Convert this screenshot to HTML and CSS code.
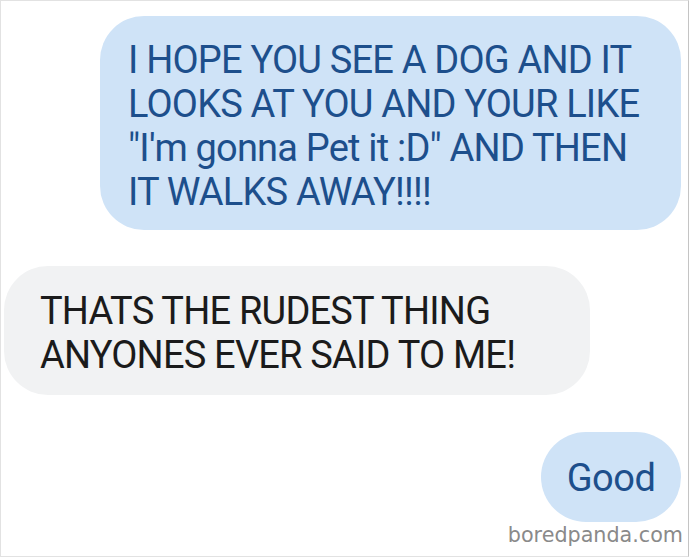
FILE: index.html
```html
<!DOCTYPE html>
<html>
<head>
<meta charset="utf-8">
<link rel="stylesheet" href="styles.css">
</head>
<body>
<div class="frame">
  <div class="row out">
    <div class="bubble sent big">I HOPE YOU SEE A DOG AND IT<br>LOOKS AT YOU AND YOUR LIKE<br>"I'm gonna Pet it :D" AND THEN<br>IT WALKS AWAY!!!!</div>
  </div>
  <div class="row in">
    <div class="bubble recv">THATS THE RUDEST THING<br>ANYONES EVER SAID TO ME!</div>
  </div>
  <div class="row out">
    <div class="bubble sent small">Good</div>
  </div>
  <div class="watermark">boredpanda.com</div>
</div>
</body>
</html>
```
FILE: styles.css
```css
html, body {
  margin: 0;
  padding: 0;
  background: #ffffff;
}
.frame {
  width: 687px;
  height: 555px;
  border: 1px solid #e2e2e2;
  border-right-color: #c4c4c4;
  background: #ffffff;
  display: flex;
  flex-direction: column;
  font-family: Roboto, "Liberation Sans", sans-serif;
}
.row {
  display: flex;
}
.row.out {
  justify-content: flex-end;
  padding-right: 7px;
}
.row.in {
  justify-content: flex-start;
  padding-left: 3px;
}
.bubble {
  font-size: 38px;
  line-height: 44px;
  letter-spacing: -0.8px;
  white-space: nowrap;
}
.sent {
  background: #cfe3f7;
  color: #1d4f8c;
}
.recv {
  background: #f1f2f3;
  color: #1b1b1b;
}
.big {
  margin-top: 15px;
  width: 581px;
  box-sizing: border-box;
  padding: 22px 28px 16px 28px;
  border-radius: 44px;
}
.recv {
  margin-top: 36px;
  width: 586px;
  box-sizing: border-box;
  padding: 23px 36px 18px 36px;
  border-radius: 44px;
}
.small {
  margin-top: 37px;
  width: 140px;
  box-sizing: border-box;
  padding: 24px 0 22px 0;
  text-align: center;
  border-radius: 45px;
  letter-spacing: -0.5px;
}
.watermark {
  align-self: flex-end;
  margin-right: 5px;
  font-family: "DejaVu Sans", Verdana, sans-serif;
  font-size: 20.7px;
  line-height: 26px;
  color: #8a8a8a;
}
```
